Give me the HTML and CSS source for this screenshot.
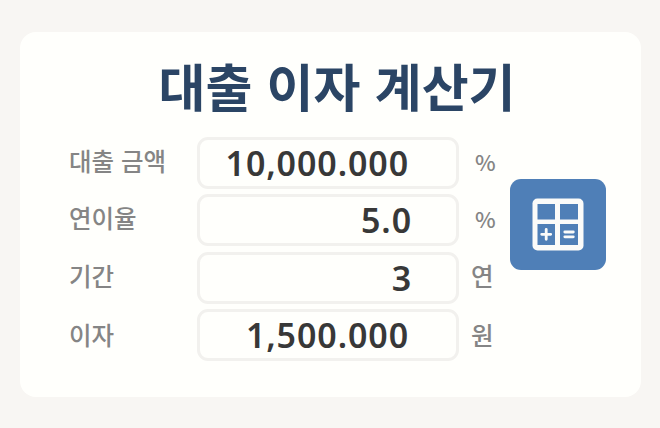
FILE: index.html
```html
<!DOCTYPE html>
<html lang="ko">
<head>
    <meta charset="UTF-8">
    <meta name="viewport" content="width=device-width, initial-scale=1.0">
    <title>대출 이자 계산기</title>
    <link rel="stylesheet" href="styles.css">
</head>
<body>

    <main class="card">
        <h1>대출 이자 계산기</h1>

        <div class="container">
            <form class="fields">
                <label for="amount">대출 금액</label>
                <input type="text" id="amount" value="10,000.000">
                <span class="unit percent">%</span>

                <label for="rate">연이율</label>
                <input type="text" id="rate" class="short" value="5.0">
                <span class="unit percent">%</span>

                <label for="period">기간</label>
                <input type="text" id="period" class="short" value="3">
                <span class="unit">연</span>

                <label for="interest" class="last">이자</label>
                <input type="text" id="interest" value="1,500.000" readonly>
                <span class="unit last">원</span>
            </form>

            <button type="button" class="calc-button" aria-label="계산">
                <svg width="52" height="53" viewBox="0 0 52 53">
                    <rect class="frame" x="0.5" y="0.5" width="51" height="52" rx="5"/>
                    <rect class="key" x="5.5" y="6" width="17.5" height="15.5"/>
                    <rect class="key" x="28" y="6" width="18" height="15.5"/>
                    <rect class="key" x="5.5" y="26" width="17.5" height="21"/>
                    <rect class="key" x="28" y="26" width="18" height="21"/>
                    <path class="sign" d="M9.7 36.3h9M14.2 31.3v10M32.8 34h8.5M32.8 38.8h8.5"/>
                </svg>
            </button>
        </div>
    </main>

</body>
</html>
```

FILE: styles.css
```css
/* 전체 */
* {
    box-sizing: border-box;
}

body {
    margin: 0;
    padding: 32px 19px 31px 20px;
    background-color: #f8f6f3;
    font-family: "Noto Sans CJK KR", sans-serif;
}

/* 카드 */
.card {
    height: 365px;
    padding-top: 27px;
    border-radius: 16px;
    background-color: #fffffc;
}

h1 {
    margin: 0 0 26px;
    padding-left: 13px;
    color: #2b4565;
    font-size: 51px;
    font-weight: 700;
    line-height: 52px;
    text-align: center;
    white-space: nowrap;
}

.container {
    display: flex;
    align-items: flex-start;
    padding-left: 49px;
}

/* 입력 영역 */
.fields {
    display: grid;
    grid-template-columns: 128px 262px 51px;
    grid-auto-rows: 52px;
    row-gap: 5.4px;
    align-items: center;
}

label,
.unit {
    padding-bottom: 4px;
    color: #858585;
    font-size: 24.5px;
    font-weight: 500;
    line-height: 36px;
    white-space: nowrap;
}

.unit {
    padding-left: 12px;
}

.percent {
    padding-left: 16px;
    font-size: 22px;
}

.last {
    padding-bottom: 0;
}

input {
    width: 100%;
    height: 52px;
    padding: 0 47px 0 0;
    border: 3px solid #f2f1ee;
    border-radius: 11px;
    background-color: #fffffc;
    color: #383838;
    font-family: "Noto Sans", sans-serif;
    font-size: 34px;
    font-weight: 570;
    letter-spacing: 0.9px;
    text-align: right;
}

.short {
    padding-right: 44px;
}

/* 계산 버튼 */
.calc-button {
    display: flex;
    align-items: center;
    justify-content: center;
    width: 96px;
    height: 91px;
    margin-top: 42px;
    padding: 0;
    border: none;
    border-radius: 11px;
    background-color: #4f7fb7;
    cursor: pointer;
}

.frame {
    fill: #fbfbf9;
}

.key {
    fill: #4f7fb7;
}

.sign {
    fill: none;
    stroke: #fbfbf9;
    stroke-width: 2.8;
    stroke-linecap: round;
}
```
